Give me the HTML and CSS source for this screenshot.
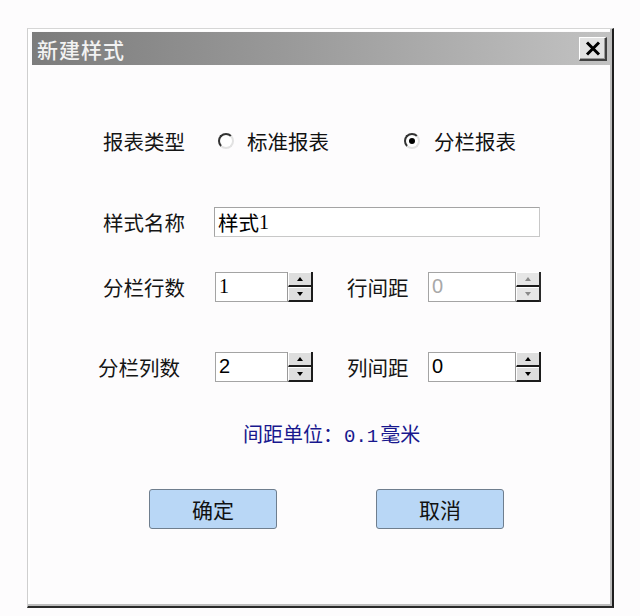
FILE: index.html
```html
<!DOCTYPE html>
<html lang="zh-CN">
<head>
<meta charset="utf-8">
<title>新建样式</title>
<link rel="stylesheet" href="styles.css">
</head>
<body>
<div class="dialog">
  <div class="titlebar">
    <span class="title">新建样式</span>
    <span class="close">
      <svg width="16" height="15" viewBox="0 0 16 15"><path d="M2 1.5 L14 13.5 M14 1.5 L2 13.5" stroke="#000" stroke-width="3" fill="none"/></svg>
    </span>
  </div>
  <div class="body">
    <div class="row row-type">
      <span class="label">报表类型</span>
      <span class="radio-item radio-first"><span class="radio"></span><span class="text">标准报表</span></span>
      <span class="radio-item"><span class="radio checked"></span><span class="text">分栏报表</span></span>
    </div>

    <div class="row row-name">
      <span class="label label-name">样式名称</span>
      <span class="textbox">样式<span class="digit">1</span></span>
    </div>

    <div class="row row-lines">
      <span class="label">分栏行数</span>
      <span class="spin">
        <span class="spin-field"><span class="digit">1</span></span>
        <span class="spin-btns">
          <span class="spin-btn"><span class="arrow-up"></span></span>
          <span class="spin-btn"><span class="arrow-down"></span></span>
        </span>
      </span>
      <span class="label label-gap">行间距</span>
      <span class="spin spin-wide disabled">
        <span class="spin-field">0</span>
        <span class="spin-btns">
          <span class="spin-btn"><span class="arrow-up"></span></span>
          <span class="spin-btn"><span class="arrow-down"></span></span>
        </span>
      </span>
    </div>

    <div class="row row-cols">
      <span class="label label-shift">分栏列数</span>
      <span class="spin">
        <span class="spin-field">2</span>
        <span class="spin-btns">
          <span class="spin-btn"><span class="arrow-up"></span></span>
          <span class="spin-btn"><span class="arrow-down"></span></span>
        </span>
      </span>
      <span class="label label-gap">列间距</span>
      <span class="spin spin-wide">
        <span class="spin-field">0</span>
        <span class="spin-btns">
          <span class="spin-btn"><span class="arrow-up"></span></span>
          <span class="spin-btn"><span class="arrow-down"></span></span>
        </span>
      </span>
    </div>

    <div class="row row-info">
      <span class="info">间距单位：<span class="mono">0.1</span>毫米</span>
    </div>

    <div class="row row-buttons">
      <span class="btn">确定</span>
      <span class="btn btn-cancel">取消</span>
    </div>
  </div>
</div>
</body>
</html>
```

FILE: styles.css
```css
* { box-sizing: border-box; }

html, body {
  margin: 0;
  padding: 0;
  background: #fdfcfd;
  font-family: "Noto Sans CJK SC", "Liberation Sans", sans-serif;
  color: #111;
}

.dialog {
  margin: 28px 0 0 27px;
  width: 587px;
  height: 580px;
  border-top: 1px solid #d6d6d6;
  border-left: 1px solid #cfcfcf;
  border-right: 2px solid #1e1e1e;
  border-bottom: 2px solid #2a2a2a;
  padding: 3px 2px 2px 4px;
  background: #fdfcfd;
  box-shadow: inset -2px -2px 0 #bdbdbd, inset 2px 2px 0 #ffffff;
  display: flex;
  flex-direction: column;
}

.titlebar {
  height: 33px;
  flex: none;
  display: flex;
  align-items: center;
  justify-content: space-between;
  padding: 0 3px 0 5px;
  background: linear-gradient(to right, #7c7c7c 0%, #9a9a9a 45%, #c2c2c2 100%);
}

.title {
  font-size: 21px;
  line-height: 24px;
  letter-spacing: 1px;
  color: #f2f2f2;
  font-weight: 500;
}

.close {
  width: 28px;
  height: 24px;
  display: flex;
  align-items: center;
  justify-content: center;
  background: #e2e2e2;
  border-top: 1px solid #ffffff;
  border-left: 1px solid #ffffff;
  border-right: 2px solid #404040;
  border-bottom: 2px solid #404040;
  box-shadow: inset -1px -1px 0 #9a9a9a;
}

.body {
  flex: 1;
  padding: 58px 0 0 71px;
  display: flex;
  flex-direction: column;
}

.row {
  display: flex;
  align-items: center;
}

.label {
  font-size: 20.5px;
  line-height: 24px;
  width: 112px;
  flex: none;
  color: #151515;
}

.label-name { width: 111px; }
.label-shift { margin-left: -5px; width: 117px; }

.label-gap {
  width: 81px;
  margin-left: 34px;
}

/* row 1 */
.row-type { height: 36px; }

.radio-item {
  display: flex;
  align-items: center;
  font-size: 20.5px;
  line-height: 24px;
}

.radio-first {
  margin-left: 3px;
  width: 186px;
  gap: 13px;
}

.radio-item:not(.radio-first) { gap: 14px; }

.radio {
  width: 16px;
  height: 16px;
  border-radius: 50%;
  border: 2px solid;
  border-color: #333333 #e2e2e2 #e2e2e2 #333333;
  background: #ffffff;
  display: flex;
  align-items: center;
  justify-content: center;
}

.radio.checked::after {
  content: "";
  width: 6px;
  height: 6px;
  border-radius: 50%;
  background: #000;
}

/* row 2 */
.row-name { margin-top: 48px; height: 30px; }

.textbox {
  width: 326px;
  height: 30px;
  border: 1px solid #a4a4a4;
  border-right-color: #c8c8c8;
  border-bottom-color: #c8c8c8;
  background: #ffffff;
  font-size: 20.5px;
  line-height: 26px;
  padding-left: 3px;
  color: #000;
  display: flex;
  align-items: center;
}

.digit {
  font-family: "Liberation Serif", serif;
  font-size: 20px;
}

/* spin boxes */
.row-lines { margin-top: 35px; height: 30px; }
.row-cols { margin-top: 50px; height: 30px; }

.spin {
  width: 98px;
  height: 30px;
  display: flex;
  flex: none;
}

.spin-wide { width: 113px; }

.spin-field {
  flex: 1;
  border: 1px solid #a4a4a4;
  border-right: none;
  background: #ffffff;
  font-family: "Liberation Sans", sans-serif;
  font-size: 20px;
  line-height: 26px;
  padding-left: 3px;
  color: #000;
}

.disabled .spin-field { color: #a8a8a8; }

.spin-btns {
  width: 26px;
  display: flex;
  flex-direction: column;
  border-right: 2px solid #1c1c1c;
  border-left: 1px solid #9a9a9a;
}

.spin-btn {
  flex: 1;
  background: #dedede;
  border-top: 1px solid #ffffff;
  border-left: 1px solid #ffffff;
  border-bottom: 2px solid #1c1c1c;
  display: flex;
  align-items: center;
  justify-content: center;
}

.disabled .spin-btns { border-right-color: #2a2a2a; }
.disabled .spin-btn { background: #e6e6e6; }

.arrow-up, .arrow-down {
  width: 0;
  height: 0;
  border-left: 3.5px solid transparent;
  border-right: 3.5px solid transparent;
}

.arrow-up { border-bottom: 4px solid #000; }
.arrow-down { border-top: 4px solid #000; }

.disabled .arrow-up { border-bottom-color: #8a8a8a; }
.disabled .arrow-down { border-top-color: #8a8a8a; }

/* info */
.row-info { margin-top: 41px; height: 24px; }

.info {
  margin-left: 140px;
  font-size: 20px;
  line-height: 24px;
  color: #18188e;
}

.mono {
  font-family: "Liberation Mono", monospace;
  font-size: 19px;
  margin: 0 2px 0 1px;
}

/* buttons */
.row-buttons { margin-top: 42px; }

.btn {
  width: 128px;
  height: 40px;
  margin-left: 46px;
  display: flex;
  align-items: center;
  justify-content: center;
  background: #b9d7f6;
  border: 1px solid #6f7e8e;
  border-radius: 3px;
  font-size: 21px;
  line-height: 24px;
  color: #111;
}

.btn-cancel { margin-left: 99px; }
```
